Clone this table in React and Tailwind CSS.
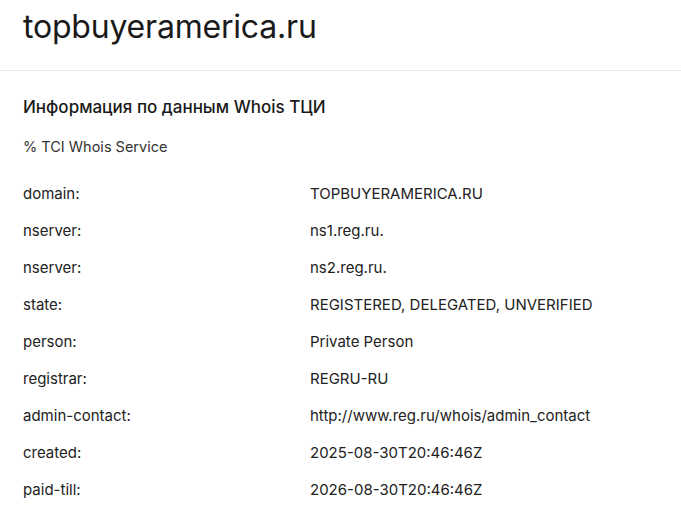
const rows = [
  ["domain:", "TOPBUYERAMERICA.RU"],
  ["nserver:", "ns1.reg.ru."],
  ["nserver:", "ns2.reg.ru."],
  ["state:", "REGISTERED, DELEGATED, UNVERIFIED"],
  ["person:", "Private Person"],
  ["registrar:", "REGRU-RU"],
  ["admin-contact:", "http://www.reg.ru/whois/admin_contact"],
  ["created:", "2025-08-30T20:46:46Z"],
  ["paid-till:", "2026-08-30T20:46:46Z"],
];

export default function App() {
  return (
    <div className="min-h-screen bg-white text-[#1a1a1a] font-['Inter','Noto_Sans',sans-serif]">
      {/* Header */}
      <header className="border-b border-[#e6e9eb] px-[23px] pt-[7px] h-[71px]">
        <h1 className="text-[32px] leading-[40px] tracking-[-0.2px]">topbuyeramerica.ru</h1>
      </header>

      {/* Whois block */}
      <section className="px-[23px] pt-[24px]">
        <h2 className="text-[17px] leading-[24px] font-medium">Информация по данным Whois ТЦИ</h2>
        <p className="mt-[18px] text-[14.5px] leading-[20px] text-[#333]">% TCI Whois Service</p>

        <div className="mt-[18px] text-[15px] leading-[20px] text-[#222]">
          {rows.map(([k, v], i) => (
            <div key={i} className="grid grid-cols-[287px_1fr] py-[8.5px]">
              <span>{k}</span>
              <span>{v}</span>
            </div>
          ))}
        </div>
      </section>
    </div>
  );
}
